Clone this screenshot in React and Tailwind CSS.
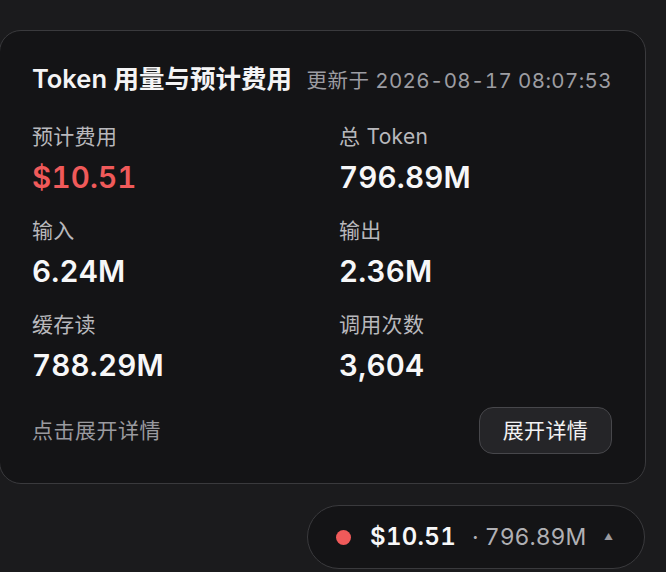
import React from 'react';

const STATS = [
  { label: '预计费用', value: '$10.51', red: true },
  { label: '总 Token', value: '796.89M' },
  { label: '输入', value: '6.24M' },
  { label: '输出', value: '2.36M' },
  { label: '缓存读', value: '788.29M' },
  { label: '调用次数', value: '3,604' },
];

export default function App() {
  return (
    <div className="w-[666px] h-[572px] overflow-hidden bg-[#1b1b1d] pt-[30px] flex flex-col font-['Inter','Noto_Sans_CJK_SC',sans-serif]">
      {/* Card */}
      <div className="ml-[-1px] w-[647px] rounded-[22px] border border-[#3a3a3d] bg-[#141416] pt-[33px] pb-[29px] pl-[32px] pr-[33px]">
        <div className="flex items-baseline justify-between whitespace-nowrap">
          <h2 className="text-[25.5px] leading-[30px] font-semibold text-[#f4f4f5]">Token 用量与预计费用</h2>
          <span className="text-[20.5px] leading-[30px] tracking-[0.4px] tabular-nums text-[#9d9da2]">更新于 2026-08-17 08:07:53</span>
        </div>

        <div className="mt-[27px] grid grid-cols-[307px_1fr] gap-y-[22px]">
          {STATS.map((s) => (
            <div key={s.label}>
              <div className="text-[21px] leading-[27px] tracking-[0.3px] text-[#b8b8bc]">{s.label}</div>
              <div
                className={
                  s.red
                    ? 'mt-[9px] text-[29.5px] leading-[36px] font-semibold tracking-[0.2px] tabular-nums text-[#f05a5a]'
                    : 'mt-[9px] text-[29.5px] leading-[36px] font-semibold tracking-[0.2px] tabular-nums text-[#f7f7f8]'
                }
              >
                {s.value}
              </div>
            </div>
          ))}
        </div>

        <div className="mt-[24px] flex items-center justify-between">
          <span className="text-[21px] tracking-[0.5px] text-[#9a9a9f]">点击展开详情</span>
          <button className="h-[47px] px-[23px] rounded-[14px] border border-[#47474b] bg-[#252528] text-[21px] tracking-[0.3px] text-[#f2f2f3]">
            展开详情
          </button>
        </div>
      </div>

      {/* Summary pill */}
      <div className="self-end mr-[21px] mt-[21px] h-[64px] w-[338px] rounded-full border border-[#3a3a3d] bg-[#141416] flex items-center pl-[28px] pr-[31px]">
        <span className="w-[15px] h-[15px] rounded-full bg-[#f05a5a]" />
        <span className="ml-[19px] text-[24px] font-semibold tabular-nums tracking-[0.3px] text-[#f7f7f8]">$10.51</span>
        <span className="ml-[16px] text-[23px] tabular-nums text-[#b0b0b4]">· 796.89M</span>
        <span className="ml-auto text-[9px] text-[#9a9a9f]">▲</span>
      </div>
    </div>
  );
}
